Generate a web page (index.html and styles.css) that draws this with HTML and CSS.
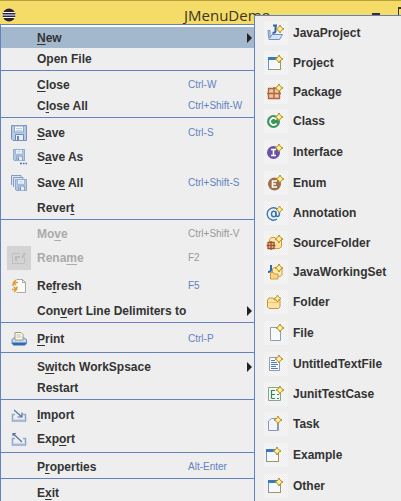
FILE: index.html
```
<!DOCTYPE html>
<html lang="en">
<head>
    <meta charset="UTF-8">
    <meta name="viewport" content="width=device-width, initial-scale=1.0">
    <title>JMenuDemo</title>
    <link rel="stylesheet" href="styles.css">
</head>
<body>
    <!-- shared icon parts -->
    <svg class="sprite" width="0" height="0">
        <symbol id="star" viewBox="0 0 8 8">
            <path d="M4 0 L5.4 2.6 L8 4 L5.4 5.4 L4 8 L2.6 5.4 L0 4 L2.6 2.6 Z" fill="#fff3a0" stroke="#b08a1e" stroke-width="1"/>
        </symbol>
        <symbol id="wizard" viewBox="0 0 16 16">
            <rect x="1.5" y="3.5" width="12" height="11" fill="#f4f9ff" stroke="#a39462"/>
            <path d="M1.5 14V3.5" stroke="#6b93c9"/>
            <rect x="1" y="2" width="10" height="3" fill="#3b78c0"/>
            <use href="#star" x="8" y="0" width="8" height="8"/>
        </symbol>
        <symbol id="floppy" viewBox="0 0 16 16">
            <path d="M.5.5h15v15H2L.5 14Z" fill="#b4cbe8" stroke="#7590bb"/>
            <rect x="3.5" y="1" width="9" height="6" fill="#f5f9ff" stroke="#8fa6ca"/>
            <path d="M5 3.5h6M5 5.5h6" stroke="#b9cbe3"/>
            <path d="M4.500 15V9.500h8V15" fill="#e8eff9" stroke="#6f88b3"/>
            <rect x="6" y="11" width="2" height="4" fill="#6f88b3"/>
        </symbol>
        <symbol id="tray" viewBox="0 0 16 16">
            <path d="M4 7.500H1.500V14H14.500V7.500H12" fill="none" stroke="#8fa9d0" stroke-width="1.600"/>
            <path d="M3 12.500h10" stroke="#c5d5ea"/>
        </symbol>
    </svg>

    <div class="window">
        <header class="titlebar">
            <svg class="logo" width="14" height="14" viewBox="0 0 14 14">
                <circle cx="7" cy="7" r="6.500" fill="#2c2238"/>
                <path d="M1 4.500h12M0 7h14M1 9.500h12" stroke="#fff" stroke-width="1.200"/>
            </svg>
            <h1>JMenuDemo</h1>
            <div class="controls">
                <button class="minimize" aria-label="Minimize"></button>
                <button class="maximize" aria-label="Maximize"></button>
            </div>
        </header>

        <nav class="menu">
            <button class="item selected"><span class="icon"></span><span><u>N</u>ew</span><kbd></kbd><i class="arrow"></i></button>
            <button class="item"><span class="icon"></span><span>Open File</span></button>
            <hr>
            <button class="item"><span class="icon"></span><span><u>C</u>lose</span><kbd>Ctrl-W</kbd></button>
            <button class="item"><span class="icon"></span><span>C<u>l</u>ose All</span><kbd>Ctrl+Shift-W</kbd></button>
            <hr>
            <button class="item medium">
                <span class="icon"><svg width="16" height="16"><use href="#floppy"/></svg></span>
                <span><u>S</u>ave</span><kbd>Ctrl-S</kbd>
            </button>
            <button class="item medium">
                <span class="icon">
                    <svg width="16" height="16" viewBox="0 0 16 16">
                        <use href="#floppy" x="2" y="0" width="12" height="12"/>
                        <path d="M9 14.500h2M12 14.500h1.500M14.500 14.500H16" stroke="#4a6fb0" stroke-width="1.500"/>
                    </svg>
                </span>
                <span>S<u>a</u>ve As</span>
            </button>
            <button class="item tall">
                <span class="icon">
                    <svg width="16" height="16" viewBox="0 0 16 16">
                        <path d="M.5 10V.5H10V3M2.500 12V2.500H12V5" fill="#dce8f6" stroke="#7f9ac4"/>
                        <use href="#floppy" x="4" y="4" width="12" height="12"/>
                    </svg>
                </span>
                <span>Sav<u>e</u> All</span><kbd>Ctrl+Shift-S</kbd>
            </button>
            <button class="item"><span class="icon"></span><span>Rever<u>t</u></span></button>
            <hr>
            <button class="item" disabled><span class="icon"></span><span>Mo<u>v</u>e</span><kbd>Ctrl+Shift-V</kbd></button>
            <button class="item tall" disabled>
                <span class="icon boxed">
                    <svg width="16" height="16" viewBox="0 0 16 16">
                        <path d="M1.500 3.500H9M1.500 3.500v10h12V7" fill="none" stroke="#c0c0c0"/>
                        <path d="M5 11V7h4M11 8l3-5" fill="none" stroke="#bcbcbc" stroke-width="2"/>
                    </svg>
                </span>
                <span>Rena<u>m</u>e</span><kbd>F2</kbd>
            </button>
            <button class="item tall">
                <span class="icon">
                    <svg width="16" height="16" viewBox="0 0 16 16">
                        <path d="M5.500 1.500h6l3 3v10h-9" fill="#fbfbf8" stroke="#a9a9a0"/>
                        <path d="M11.500 1.500v3h3" fill="none" stroke="#a9a9a0"/>
                        <path d="M7 4.500H4Q2 4.500 2 8M1 11.500h3Q6 11.500 6 8.500" fill="none" stroke="#e0a040" stroke-width="1.600"/>
                        <path d="M5 2L2.500 4.500L5 7M3 9l2.500 2.500L3 14" fill="none" stroke="#dc9830" stroke-width="1.400"/>
                    </svg>
                </span>
                <span>Re<u>f</u>resh</span><kbd>F5</kbd>
            </button>
            <button class="item"><span class="icon"></span><span>Con<u>v</u>ert Line Delimiters to</span><kbd></kbd><i class="arrow"></i></button>
            <hr>
            <button class="item print">
                <span class="icon">
                    <svg width="16" height="16" viewBox="0 0 16 16">
                        <path d="M1 8.500L3 7h10l2.500 1.500v4.500H1Z" fill="#c5daf2" stroke="#6b8fc4"/>
                        <path d="M4 9V1.500h6L12 3.500V9Z" fill="#fffdf2" stroke="#a09a80"/>
                        <path d="M5.500 4h4M5.500 6h5" stroke="#c0b890"/>
                        <path d="M1 11.500h14.500L14 14.500H2.500Z" fill="#3569ad"/>
                    </svg>
                </span>
                <span><u>P</u>rint</span><kbd>Ctrl-P</kbd>
            </button>
            <hr>
            <button class="item"><span class="icon"></span><span>S<u>w</u>itch WorkSpsace</span><kbd></kbd><i class="arrow"></i></button>
            <button class="item"><span class="icon"></span><span>Restart</span></button>
            <hr>
            <button class="item medium">
                <span class="icon">
                    <svg width="16" height="16" viewBox="0 0 16 16">
                        <use href="#tray"/>
                        <path d="M3 3l8 7M11 5.500V10H6.500" fill="none" stroke="#56729f" stroke-width="1.200"/>
                    </svg>
                </span>
                <span><u>I</u>mport</span>
            </button>
            <button class="item medium">
                <span class="icon">
                    <svg width="16" height="16" viewBox="0 0 16 16">
                        <use href="#tray"/>
                        <path d="M2 2.500l9 8.500M2 5V2.500h3" fill="none" stroke="#56729f" stroke-width="1.200"/>
                    </svg>
                </span>
                <span>Exp<u>o</u>rt</span>
            </button>
            <hr>
            <button class="item"><span class="icon"></span><span>P<u>r</u>operties</span><kbd>Alt-Enter</kbd></button>
            <hr>
            <button class="item"><span class="icon"></span><span>E<u>x</u>it</span></button>
        </nav>

        <!-- popup of "New" -->
        <nav class="submenu">
            <button class="item">
                <svg viewBox="0 0 24 24">
                    <path d="M4 9.500H6V17L8 13.500H18.500L15.500 18.500H5Z" fill="#d5e4f6" stroke="#6d8fc2"/>
                    <path d="M11.500 4v6q0 2-3 2M9 4.500h4" fill="none" stroke="#2f69ad" stroke-width="2"/>
                    <use href="#star" x="12" y="4" width="8" height="8"/>
                </svg>
                JavaProject
            </button>
            <button class="item compact"><svg viewBox="0 0 24 24"><use href="#wizard" x="3" y="4" width="16" height="16"/></svg>Project</button>
            <button class="item compact">
                <svg viewBox="0 0 24 24">
                    <path d="M4.500 8.500h11v10h-11ZM10 7v12M3 13.500h14" fill="#efc69d" stroke="#b06542" stroke-width="1.400"/>
                    <use href="#star" x="11" y="4" width="8" height="8"/>
                </svg>
                Package
            </button>
            <button class="item">
                <svg viewBox="0 0 24 24">
                    <circle cx="9.500" cy="12.500" r="6.500" fill="#3b965d"/>
                    <path d="M12.500 10.500A3.500 3.500 0 1 0 12.500 14.500" fill="none" stroke="#fff" stroke-width="1.800"/>
                    <use href="#star" x="11" y="4" width="8" height="8"/>
                </svg>
                Class
            </button>
            <button class="item tall">
                <svg viewBox="0 0 24 24">
                    <circle cx="9.500" cy="12.500" r="6.500" fill="#6a52a5"/>
                    <path d="M7 9.500h5M9.500 9.500v6M7 15.500h5" stroke="#fff" stroke-width="1.600"/>
                    <use href="#star" x="11" y="4" width="8" height="8"/>
                </svg>
                Interface
            </button>
            <button class="item tall">
                <svg viewBox="0 0 24 24">
                    <circle cx="10.500" cy="13" r="6.500" fill="#9c704a"/>
                    <path d="M13 10H8.500v6H13M8.500 13H12" fill="none" stroke="#fff" stroke-width="1.600"/>
                    <use href="#star" x="12" y="4" width="8" height="8"/>
                </svg>
                Enum
            </button>
            <button class="item">
                <svg viewBox="0 0 24 24">
                    <path d="M13 18A6.200 6.200 0 1 1 15.500 12Q15.500 15.500 13.500 15.500Q12 15.500 12 14V10.500" fill="none" stroke="#3977b4" stroke-width="1.400"/>
                    <ellipse cx="9.800" cy="13" rx="2.300" ry="2.800" fill="none" stroke="#3977b4" stroke-width="1.400"/>
                    <use href="#star" x="12" y="5" width="7" height="7"/>
                </svg>
                Annotation
            </button>
            <button class="item compact">
                <svg viewBox="0 0 24 24">
                    <path d="M5.500 15V8.500L7 6.500h4l1.500 2h5V16L15 17.500H7Z" fill="#fbe3a4" stroke="#d49a3c"/>
                    <path d="M4 11.500h6v6H4ZM7 10v9M2.500 14.500h9" fill="#f0cba4" stroke="#9d5131" stroke-width="1.300"/>
                    <use href="#star" x="11" y="4" width="8" height="8"/>
                </svg>
                SourceFolder
            </button>
            <button class="item compact">
                <svg viewBox="0 0 24 24">
                    <path d="M7 5v5q0 2-3 2" fill="none" stroke="#2f69ad" stroke-width="2"/>
                    <path d="M8.500 15V9L10 7.500h3l1 1.500h4v6L16 16.500Z" fill="#fce8b4" stroke="#d09a44"/>
                    <path d="M6.500 12.500h3l1 1.500H14v5H6.500Z" fill="#f8d380" stroke="#d09a44"/>
                    <use href="#star" x="11" y="4" width="8" height="8"/>
                </svg>
                JavaWorkingSet
            </button>
            <button class="item tall">
                <svg viewBox="0 0 24 24">
                    <path d="M3.500 17V10L5 8h4l1.500 2H16v7L14.500 18.500H5Z" fill="#fbe3a4" stroke="#cc9340"/>
                    <path d="M4 12.500h11" stroke="#f3c568"/>
                    <use href="#star" x="10" y="5" width="7" height="7"/>
                </svg>
                Folder
            </button>
            <button class="item tall">
                <svg viewBox="0 0 24 24">
                    <path d="M6.500 6.500h10v13h-10Z" fill="#f7fafd" stroke="#939da7"/>
                    <use href="#star" x="12" y="3" width="8" height="8"/>
                </svg>
                File
            </button>
            <button class="item tall">
                <svg viewBox="0 0 24 24">
                    <path d="M5.500 5.500h10v13h-10Z" fill="#f7fafd" stroke="#939da7"/>
                    <path d="M7 8.500h4M7 10.500h6M7 12.500h7M7 14.500h5M7 16.500h7" stroke="#4f80b6"/>
                    <use href="#star" x="11" y="3" width="8" height="8"/>
                </svg>
                UntitledTextFile
            </button>
            <button class="item">
                <svg viewBox="0 0 24 24">
                    <path d="M4.500 5.500h12v13h-12Z" fill="#f4faf4" stroke="#86a78a"/>
                    <path d="M7.500 8v8.500M7.500 8.500H11M7.500 12.500H11M7.500 16.500H11M13 12.500h2M13 16.500h2" stroke="#358656" stroke-width="1.200"/>
                    <use href="#star" x="12" y="4" width="8" height="8"/>
                </svg>
                JunitTestCase
            </button>
            <button class="item">
                <svg viewBox="0 0 24 24">
                    <path d="M4.500 18.500V9L7.500 6.500H15.500L13.500 9V18.500Z" fill="#f1f5fb" stroke="#8b99b5"/>
                    <path d="M13.500 18.500h1v-10" fill="none" stroke="#8b99b5"/>
                    <use href="#star" x="10" y="4" width="8" height="8"/>
                </svg>
                Task
            </button>
            <button class="item tall"><svg viewBox="0 0 24 24"><use href="#wizard" x="1" y="4" width="16" height="16"/></svg>Example</button>
            <button class="item tall"><svg viewBox="0 0 24 24"><use href="#wizard" x="3" y="4" width="16" height="16"/></svg>Other</button>
        </nav>
    </div>
</body>
</html>
```
FILE: styles.css
```
* {
    box-sizing: border-box;
}
body {
    margin: 0;
    background: #eee;
    font-family: "Liberation Sans", Arial, sans-serif;
}
.sprite {
    position: absolute;
}
.window {
    position: relative;
    height: 100vh;
    overflow: hidden;
}
.titlebar {
    display: flex;
    align-items: flex-start;
    height: 24px;
    padding-left: 2px;
    border-top: 1px solid #b89f3c;
    background: #f5dc69;
}
.titlebar .logo {
    margin-top: 7px;
}
.titlebar h1 {
    flex: 1;
    margin: 4px 0 0 168px;
    font: 15px/20px "Open Sans", sans-serif;
    color: #3a3420;
}
.controls {
    display: flex;
    align-items: flex-start;
    gap: 18px;
    margin: 6px -7px 0 0;
}
.controls button {
    padding: 0;
    border: 0;
    background: none;
}
.controls .minimize {
    width: 8px;
    height: 8px;
    border-bottom: 2px solid #333;
}
.controls .maximize {
    width: 10px;
    height: 10px;
    border: 1px solid #333;
    border-top-width: 2px;
}
.menu {
    width: 255px;
    padding-top: 2px;
    border: 1px solid #6382bf;
    box-shadow: inset 0 2px #fff;
    background: #eee;
}
.menu hr {
    height: 1px;
    margin: 1px 0 3px;
    border: 0;
    background: #6382bf;
}
.item {
    display: flex;
    align-items: center;
    width: 100%;
    height: 21px;
    padding: 0;
    border: 0;
    background: none;
    font: bold 12px/16px "Liberation Sans", Arial, sans-serif;
    color: #333;
    text-align: left;
    white-space: nowrap;
}
.item u {
    text-underline-offset: 2px;
    text-decoration-skip-ink: none;
}
.menu .item {
    display: grid;
    grid-template-columns: 30px 151px 59px 5px;
    padding-left: 6px;
}
.menu .medium {
    height: 24px;
}
.menu .print {
    height: 25px;
}
.menu .tall {
    height: 28px;
}
.menu .selected {
    background: #a3b8cc;
}
.item:disabled {
    color: #aaa;
}
.icon {
    display: flex;
    align-items: center;
    justify-content: center;
    width: 24px;
}
.boxed {
    height: 24px;
    background: #d3d3d3;
}
.item kbd {
    font: 10px/16px "Liberation Sans", Arial, sans-serif;
    color: #6382bf;
}
.item:disabled kbd {
    color: #999;
}
.arrow {
    border: 5px solid transparent;
    border-left-color: #222;
    border-right: 0;
}
.submenu {
    position: absolute;
    top: 15px;
    left: 254px;
    right: 0;
    padding: 2px 0 0 9px;
    border: 1px solid #6382bf;
    border-width: 1px 0 0 1px;
    background: #eee;
}
.submenu .item {
    gap: 5px;
    height: 30px;
}
.submenu .compact {
    height: 29px;
}
.submenu .tall {
    height: 31px;
}
.submenu svg {
    width: 24px;
    height: 24px;
    background: conic-gradient(#f6f6f6 25%, #eee 0 50%, #f6f6f6 0 75%, #eee 0) 0 0 / 2px 2px;
}
```
